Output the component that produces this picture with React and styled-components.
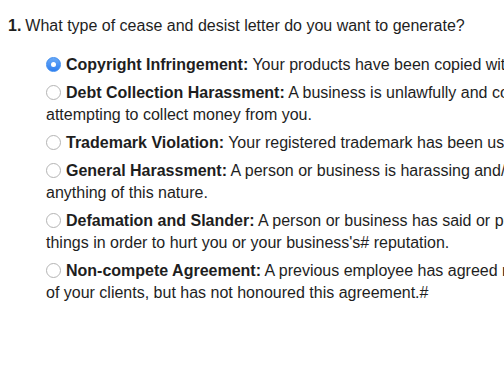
import React, { useState } from 'react'
import styled, { createGlobalStyle } from 'styled-components'

const GlobalStyle = createGlobalStyle`
  html, body {
    margin: 0;
    padding: 0;
    background: #fff;
    overflow: hidden;
  }
  body {
    font-family: "Liberation Sans", Arial, Helvetica, sans-serif;
    color: #1e1e1e;
  }
`

const Page = styled.div`
  width: 780px;
  padding: 15px 8px 0 8px;
`

const Question = styled.div`
  font-size: 16px;
  line-height: 22px;
  margin: 0 0 17px 0;

  b {
    font-weight: 700;
    margin-right: 4px;
  }
`

const Options = styled.ul`
  list-style: none;
  margin: 0;
  padding: 0 0 0 38px;
`

const Option = styled.li`
  font-size: 16px;
  line-height: 22px;
  margin-bottom: 6px;
  cursor: pointer;

  b {
    font-weight: 700;
  }
`

const Radio = styled.span`
  display: inline-block;
  box-sizing: border-box;
  width: 15px;
  height: 15px;
  border-radius: 50%;
  vertical-align: -2px;
  margin-right: 5px;
  position: relative;
  border: 1px solid ${p => (p.checked ? '#3d8cf0' : '#b4b4b4')};
  background: ${p => (p.checked ? 'linear-gradient(#6aa9f7, #2f7ff0)' : '#fff')};

  &::after {
    content: '';
    display: ${p => (p.checked ? 'block' : 'none')};
    position: absolute;
    left: 50%;
    top: 50%;
    width: 5px;
    height: 5px;
    margin: -2.5px 0 0 -2.5px;
    border-radius: 50%;
    background: #fff;
  }
`

const options = [
  {
    title: 'Copyright Infringement:',
    lines: ['Your products have been copied without your permission.'],
  },
  {
    title: 'Debt Collection Harassment:',
    lines: ['A business is unlawfully and consistently harassing you by', 'attempting to collect money from you.'],
  },
  {
    title: 'Trademark Violation:',
    lines: ['Your registered trademark has been used without your permission.'],
  },
  {
    title: 'General Harassment:',
    lines: ['A person or business is harassing and/or threatening you or doing', 'anything of this nature.'],
  },
  {
    title: 'Defamation and Slander:',
    lines: ['A person or business has said or published false and damaging', "things in order to hurt you or your business's# reputation."],
  },
  {
    title: 'Non-compete Agreement:',
    lines: ['A previous employee has agreed not to solicit or poach any', 'of your clients, but has not honoured this agreement.#'],
  },
]

export default function App() {
  const [selected, setSelected] = useState(0)

  return (
    <Page>
      <GlobalStyle />
      <Question>
        <b>1.</b>What type of cease and desist letter do you want to generate?
      </Question>
      <Options>
        {options.map((o, i) => (
          <Option key={o.title} onClick={() => setSelected(i)}>
            <Radio checked={selected === i} />
            <b>{o.title}</b> {o.lines[0]}
            {o.lines[1] && (
              <>
                <br />
                {o.lines[1]}
              </>
            )}
          </Option>
        ))}
      </Options>
    </Page>
  )
}
